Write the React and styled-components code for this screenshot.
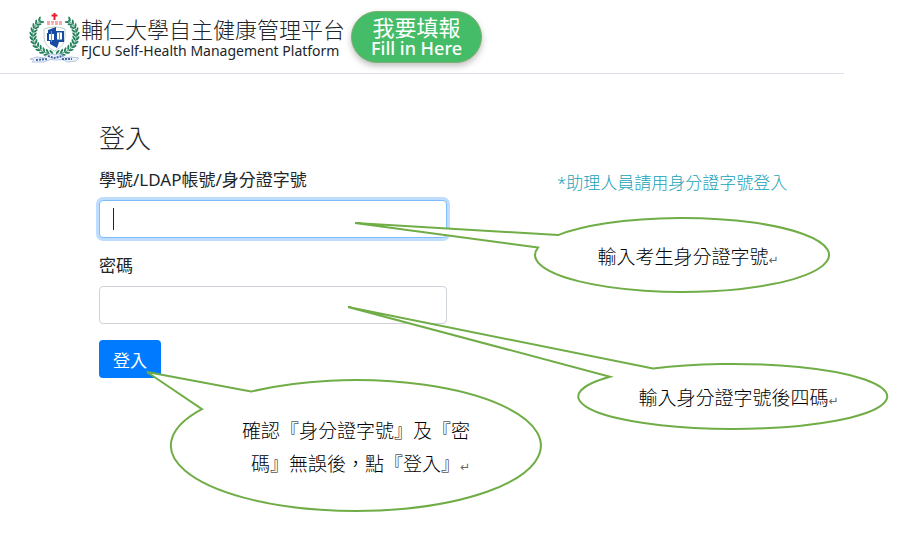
import React from "react";
import styled, { createGlobalStyle } from "styled-components";

const GlobalStyle = createGlobalStyle`
  *, *::before, *::after { box-sizing: border-box; }
  body {
    margin: 0;
    background: #fff;
    color: #212529;
    font-family: "Noto Sans", "Noto Sans CJK TC", sans-serif;
    font-weight: 300;
  }
`;

const Page = styled.div`
  position: relative;
  min-height: 100vh;
`;

const Header = styled.header`
  display: flex;
  align-items: center;
  margin-right: 55px;
  padding: 11px 0 10px 29px;
  border-bottom: 1px solid #dfe2ea;
`;

const Brand = styled.a`
  display: flex;
  align-items: center;
  gap: 1px;
  color: inherit;
  text-decoration: none;
`;

const BrandText = styled.span`
  display: flex;
  flex-direction: column;
  padding-top: 3px;
  white-space: nowrap;
`;

const BrandName = styled.span`
  font-size: 22px;
  line-height: 24px;
`;

const BrandSubtitle = styled.span`
  font-size: 14px;
  line-height: 20px;
  font-weight: 400;
`;

const FillButton = styled.button`
  display: flex;
  flex-direction: column;
  align-items: center;
  justify-content: center;
  height: 52px;
  margin-left: 6px;
  padding: 0 19px;
  border: 1px solid #7fae72;
  border-radius: 26px;
  background: #45bd68;
  box-shadow: 0 3px 6px rgba(0, 0, 0, 0.25);
  color: #fff;
  font-family: inherit;
  font-size: 18px;
  line-height: 20px;
  font-weight: 500;
  white-space: nowrap;
`;

const FillButtonTitle = styled.span`
  font-size: 22px;
  line-height: 22px;
  font-weight: 400;
`;

const Main = styled.main`
  display: grid;
  grid-template-columns: minmax(0, 348px) 1fr;
  column-gap: 110px;
  padding: 48px 40px 0 99px;
`;

const Title = styled.h1`
  grid-column: 1 / -1;
  margin: 0 0 14px;
  font-size: 26px;
  line-height: 32px;
  font-weight: 300;
`;

const Form = styled.form`
  display: flex;
  flex-direction: column;
  align-items: flex-start;
  gap: 16px;
`;

const Field = styled.div`
  display: flex;
  flex-direction: column;
  gap: 8px;
  width: 100%;
`;

const Label = styled.label`
  font-size: 17px;
  line-height: 24px;
  font-weight: 400;
`;

const Control = styled.div`
  position: relative;
`;

const Input = styled.input`
  display: block;
  width: 100%;
  height: 38px;
  padding: 6px 12px;
  border: 1px solid ${(p) => (p.$active ? "#80bdff" : "#ced4da")};
  border-radius: 4px;
  box-shadow: ${(p) => (p.$active ? "0 0 0 3px #bfdeff" : "none")};
  background: #fff;
  color: #495057;
  caret-color: transparent;
  font: inherit;
  font-size: 16px;
  outline: none;
`;

const Caret = styled.span`
  position: absolute;
  top: 8px;
  left: 14px;
  width: 1px;
  height: 22px;
  background: #212529;
`;

const SubmitButton = styled.button`
  height: 38px;
  padding: 0 14px;
  border: 0;
  border-radius: 4px;
  background: #007bff;
  color: #fff;
  font: inherit;
  font-size: 17px;
  font-weight: 400;
`;

const Note = styled.p`
  margin: 3px 0 0;
  color: #17a2b8;
  font-size: 17px;
  line-height: 24px;
`;

const Bubble = styled.aside`
  position: absolute;
  left: ${(p) => p.$x}px;
  top: ${(p) => p.$y}px;
  width: ${(p) => p.$w}px;
  height: ${(p) => p.$h}px;
  display: flex;
  align-items: center;
  justify-content: center;
  pointer-events: none;
`;

const BubbleShape = styled.svg`
  position: absolute;
  inset: 0;
  width: 100%;
  height: 100%;
  overflow: visible;
  fill: #fff;
  stroke: #70ad47;
  stroke-width: 2;
`;

const BubbleText = styled.p`
  position: relative;
  margin: 0;
  padding: 4px 0 0 ${(p) => (p.$multiline ? 0 : 12)}px;
  color: #000;
  font-size: 19px;
  line-height: 33px;
  text-align: right;
  white-space: nowrap;
`;

const ReturnMark = styled.span`
  color: #666;
  font: 12px "DejaVu Sans", sans-serif;
`;

function Callout({ x, y, w, h, path, lines }) {
  return (
    <Bubble $x={x} $y={y} $w={w} $h={h}>
      <BubbleShape viewBox={`0 0 ${w} ${h}`} aria-hidden="true">
        <path d={path} />
      </BubbleShape>
      <BubbleText $multiline={lines.length > 1}>
        {lines.map((line, i) => (
          <React.Fragment key={line}>
            {i > 0 && <br />}
            {line}
          </React.Fragment>
        ))}
        <ReturnMark>↵</ReturnMark>
      </BubbleText>
    </Bubble>
  );
}

const callouts = [
  {
    x: 535, y: 218, w: 294, h: 74,
    path: "M-180 5 L23 17.100 A147 37 0 1 1 3 29.600 Z",
    lines: ["輸入考生身分證字號"],
  },
  {
    x: 578, y: 364, w: 309, h: 65,
    path: "M-230 -57 L75 4.600 A154.500 32.500 0 1 1 32 12.700 Z",
    lines: ["輸入身分證字號後四碼"],
  },
  {
    x: 171, y: 380, w: 370, h: 131,
    path: "M-24 -8 L80 11.600 A185 65.500 0 1 1 31 29.200 Z",
    lines: ["確認『身分證字號』及『密", "碼』無誤後，點『登入』"],
  },
];

const leaves = Array.from({ length: 12 }, (_, i) => {
  const degrees = 102 + i * 12;
  const a = (degrees * Math.PI) / 180;
  return { x: 25 + 21 * Math.cos(a), y: 24 + 19 * Math.sin(a), degrees };
});

function Laurel() {
  return (
    <g fill="#23805a">
      <path d="M21 43 A21 19 0 0 1 12 9" fill="none" stroke="#4a9c78" />
      {leaves.map(({ x, y, degrees }) => (
        <g key={degrees} transform={`translate(${x} ${y}) rotate(${degrees + 90})`}>
          <ellipse cx="0" cy="-2.300" rx="2.600" ry="1" transform="rotate(-35)" />
          <ellipse cx="0" cy="2.300" rx="2.600" ry="1" transform="rotate(35)" />
        </g>
      ))}
    </g>
  );
}

function Emblem() {
  return (
    <svg width="51" height="52" viewBox="0 0 51 52" aria-hidden="true">
      <Laurel />
      <g transform="translate(51 0) scale(-1 1)">
        <Laurel />
      </g>
      <path d="M25.500 2v7M22.500 4.500h6" stroke="#e3202c" strokeWidth="2" />
      <path d="M18 11h3M22 11h3M26 11h3M30 11h3M18 13h3M22.500 13h2M26 13h3M30 13h3" stroke="#e85560" strokeWidth="1.200" />
      <path d="M15 18q11-4 21 0v8q0 9-10.500 14-10.500-5-10.500-14z" fill="#fff" stroke="#bcd3cc" />
      <path d="M19 19l8-3v4h8v11h-5l-2 6-7-4v-3h-3v-8h1z" fill="#174aa1" />
      <path d="M28 21.500h5v7h-5zM20 23h5v6h-5z" fill="#fff" />
      <path d="M22.500 20v11M30.500 22v6" stroke="#6f93cc" />
      <path d="M1 48l7-2 7 1q5-6 11-3 6-3 10 3l6-1 8 1-3 3-8 1q-6-4-12-2-6-2-12 2l-12 0 2-2z" fill="#eef3fb" stroke="#b5c5e2" />
      <path d="M7 49l11-1M19 45l6 2 9-2M33 48l10 0" fill="none" stroke="#4467a8" strokeWidth="2" strokeDasharray="2 1" />
    </svg>
  );
}

export default function App() {
  return (
    <>
      <GlobalStyle />
      <Page>
        <Header>
          <Brand href="#">
            <Emblem />
            <BrandText>
              <BrandName>輔仁大學自主健康管理平台</BrandName>
              <BrandSubtitle>FJCU Self-Health Management Platform</BrandSubtitle>
            </BrandText>
          </Brand>
          <FillButton type="button">
            <FillButtonTitle>我要填報</FillButtonTitle>
            <span>Fill in Here</span>
          </FillButton>
        </Header>
        <Main>
          <Title>登入</Title>
          <Form onSubmit={(e) => e.preventDefault()}>
            <Field>
              <Label htmlFor="account">學號/LDAP帳號/身分證字號</Label>
              <Control>
                <Input id="account" type="text" $active />
                <Caret />
              </Control>
            </Field>
            <Field>
              <Label htmlFor="password">密碼</Label>
              <Input id="password" type="password" />
            </Field>
            <SubmitButton type="submit">登入</SubmitButton>
          </Form>
          <Note>*助理人員請用身分證字號登入</Note>
        </Main>
        {callouts.map((c) => (
          <Callout key={c.x} {...c} />
        ))}
      </Page>
    </>
  );
}
